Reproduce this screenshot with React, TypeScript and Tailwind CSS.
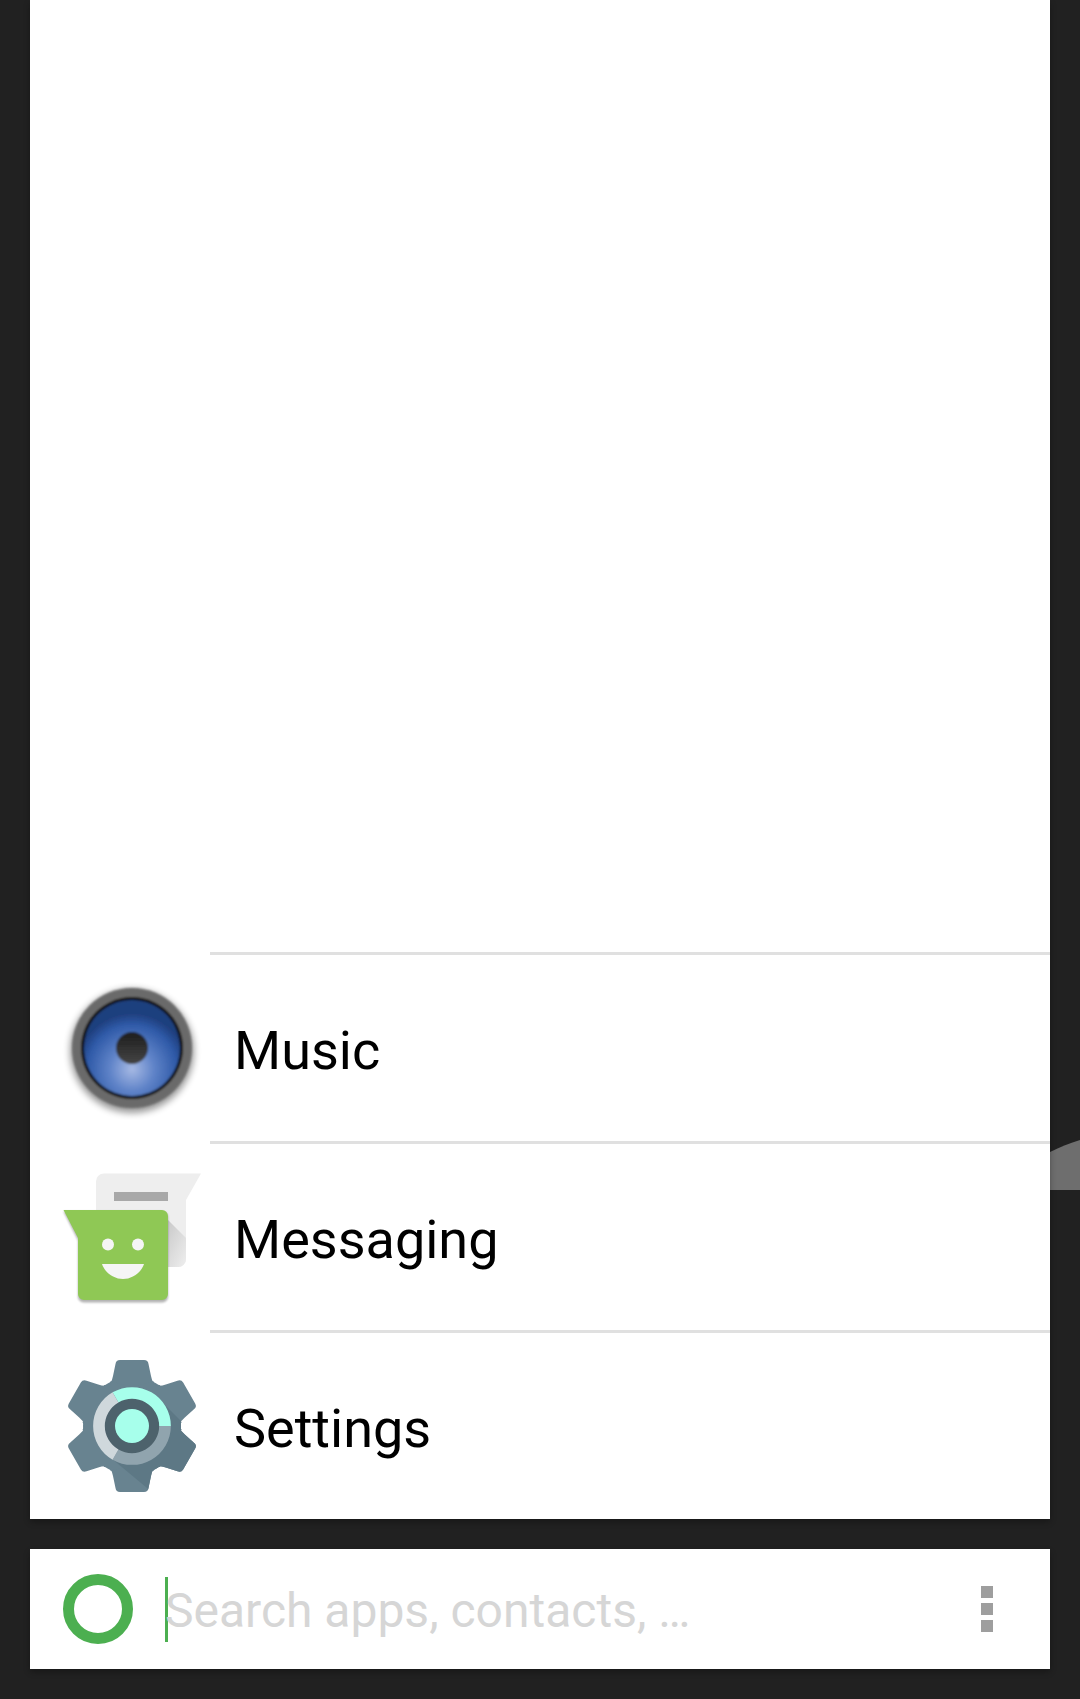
const font = { fontFamily: 'Roboto, sans-serif' };

function MusicIcon() {
  return (
    <svg viewBox="0 0 144 144" className="w-[144px] h-[144px]">
      <defs>
        <radialGradient id="cone" cx="50%" cy="72%" r="58%">
          <stop offset="0%" stopColor="#a6b9e4" />
          <stop offset="40%" stopColor="#5f83c8" />
          <stop offset="80%" stopColor="#2f5aa8" />
          <stop offset="100%" stopColor="#1f3f7e" />
        </radialGradient>
        <linearGradient id="cap" x1="0" y1="0" x2="0" y2="1">
          <stop offset="0%" stopColor="#1d1d1d" />
          <stop offset="100%" stopColor="#454545" />
        </linearGradient>
        <filter id="shade" x="-20%" y="-20%" width="140%" height="140%">
          <feGaussianBlur stdDeviation="3.5" />
        </filter>
        <filter id="soft" x="-10%" y="-10%" width="120%" height="120%">
          <feGaussianBlur stdDeviation="0.9" />
        </filter>
      </defs>
      <circle cx="72" cy="75" r="62" fill="#000" opacity="0.4" filter="url(#shade)" />
      <g filter="url(#soft)">
        <circle cx="72" cy="72" r="60" fill="#6b6b6b" />
        <circle cx="72" cy="72" r="51" fill="#0d0d0d" />
        <circle cx="72" cy="72" r="48" fill="url(#cone)" />
        <circle cx="72" cy="72" r="16" fill="url(#cap)" />
      </g>
    </svg>
  );
}

function MessagingIcon() {
  return (
    <svg viewBox="0 0 144 144" className="w-[144px] h-[144px]">
      <defs>
        <linearGradient id="fold" x1="0" y1="0" x2="0.8" y2="1">
          <stop offset="0%" stopColor="#c9c9c9" />
          <stop offset="100%" stopColor="#ebebeb" />
        </linearGradient>
        <filter id="drop" x="-10%" y="-10%" width="120%" height="120%">
          <feGaussianBlur stdDeviation="1.2" />
        </filter>
      </defs>
      <path d="M44 8.5H141L126 35V94a8 8 0 0 1-8 8H36V16.5a8 8 0 0 1 8-8z" fill="#eeeeee" />
      <path d="M108 55L126 73V94a8 8 0 0 1-8 8H108z" fill="url(#fold)" />
      <rect x="54" y="27" width="54" height="9" fill="#a8a8a8" />
      <path d="M18 74V129a6 6 0 0 0 6 7H102a6 6 0 0 0 6-7V51a6 6 0 0 0-6-6H3.5z" fill="#000" opacity="0.3" transform="translate(0 1.5)" filter="url(#drop)" />
      <path d="M3.5 45H102a6 6 0 0 1 6 6V129a6 6 0 0 1-6 6H24a6 6 0 0 1-6-6V73z" fill="#8fc855" />
      <circle cx="48" cy="79.5" r="6" fill="#f5f5f5" />
      <circle cx="78" cy="79.5" r="6" fill="#f5f5f5" />
      <path d="M42 99H84C81 108 72 114 63 114S45 108 42 99z" fill="#f5f5f5" />
    </svg>
  );
}

const tooth =
  'M60 6H84Q88 6 88.5 10L91 22Q93 33 100 31L104 46H40L44 31Q51 33 53 22L55.5 10Q56 6 60 6z';

function SettingsIcon() {
  const angles = [0, 60, 120, 180, 240, 300];
  return (
    <svg viewBox="0 0 144 144" className="w-[144px] h-[144px]">
      <defs>
        <clipPath id="gear">
          <circle cx="72" cy="72" r="49" />
          {angles.map((a) => (
            <path key={a} d={tooth} transform={`rotate(${a} 72 72)`} />
          ))}
        </clipPath>
      </defs>
      <g fill="#688390">
        <circle cx="72" cy="72" r="49" />
        {angles.map((a) => (
          <path key={a} d={tooth} transform={`rotate(${a} 72 72)`} />
        ))}
      </g>
      <path d="M99 45L144 90V144H99L45 99z" fill="#5d7885" clipPath="url(#gear)" />
      <circle cx="72" cy="72" r="28" fill="#4d626c" />
      <g fill="none" strokeWidth="11.7">
        <path d="M55.5 43.4A33 33 0 0 1 105 72" stroke="#a7ffeb" />
        <path d="M105 72A33 33 0 0 1 55.5 100.6" stroke="#90a4ae" />
        <path d="M55.5 100.6A33 33 0 0 1 55.5 43.4" stroke="#cfd8dc" />
      </g>
      <circle cx="72" cy="72" r="17" fill="#a7ffeb" />
    </svg>
  );
}

const apps = [
  { name: 'Music', icon: <MusicIcon /> },
  { name: 'Messaging', icon: <MessagingIcon /> },
  { name: 'Settings', icon: <SettingsIcon /> },
];

export default function App() {
  return (
    <div className="relative h-[1699px] w-[1080px] overflow-hidden bg-[#212121]" style={font}>
      {/* bit of wallpaper showing through past the card edge */}
      <svg viewBox="0 0 30 50" className="absolute left-[1050px] top-[1140px] w-[30px] h-[50px]">
        <path d="M0 12C10 7 20 3 30 0V50H0z" fill="#6e6e6e" />
      </svg>

      <div className="relative mx-[30px] flex h-[1519px] flex-col justify-end bg-white shadow-[0_3px_6px_rgba(0,0,0,0.3)]">
        {apps.map((app) => (
          <div key={app.name} className="flex h-[189px]">
            <div className="ml-[30px] mb-[21px] h-[144px] w-[144px] self-end">{app.icon}</div>
            <div className="ml-[6px] flex flex-1 items-center border-t-[3px] border-[#e0e0e0] pl-[24px] pt-[4px] text-[54px] text-black">
              {app.name}
            </div>
          </div>
        ))}
      </div>

      <div className="relative mx-[30px] mt-[30px] flex h-[120px] items-center bg-white shadow-[0_3px_6px_rgba(0,0,0,0.3)]">
        <div className="ml-[33px] h-[70px] w-[70px] rounded-full border-[11px] border-[#4caf50]" />
        <div className="ml-[32px] h-[65px] w-[3px] bg-[#4caf50]" />
        <div className="-ml-[3px] flex-1 pt-[4px] text-[48px] text-[#d6d6d6]">Search apps, contacts, …</div>
        <div className="mr-[57px] flex flex-col gap-[5px]">
          <div className="h-[12px] w-[12px] bg-[#9e9e9e]" />
          <div className="h-[12px] w-[12px] bg-[#9e9e9e]" />
          <div className="h-[12px] w-[12px] bg-[#9e9e9e]" />
        </div>
      </div>
    </div>
  );
}
